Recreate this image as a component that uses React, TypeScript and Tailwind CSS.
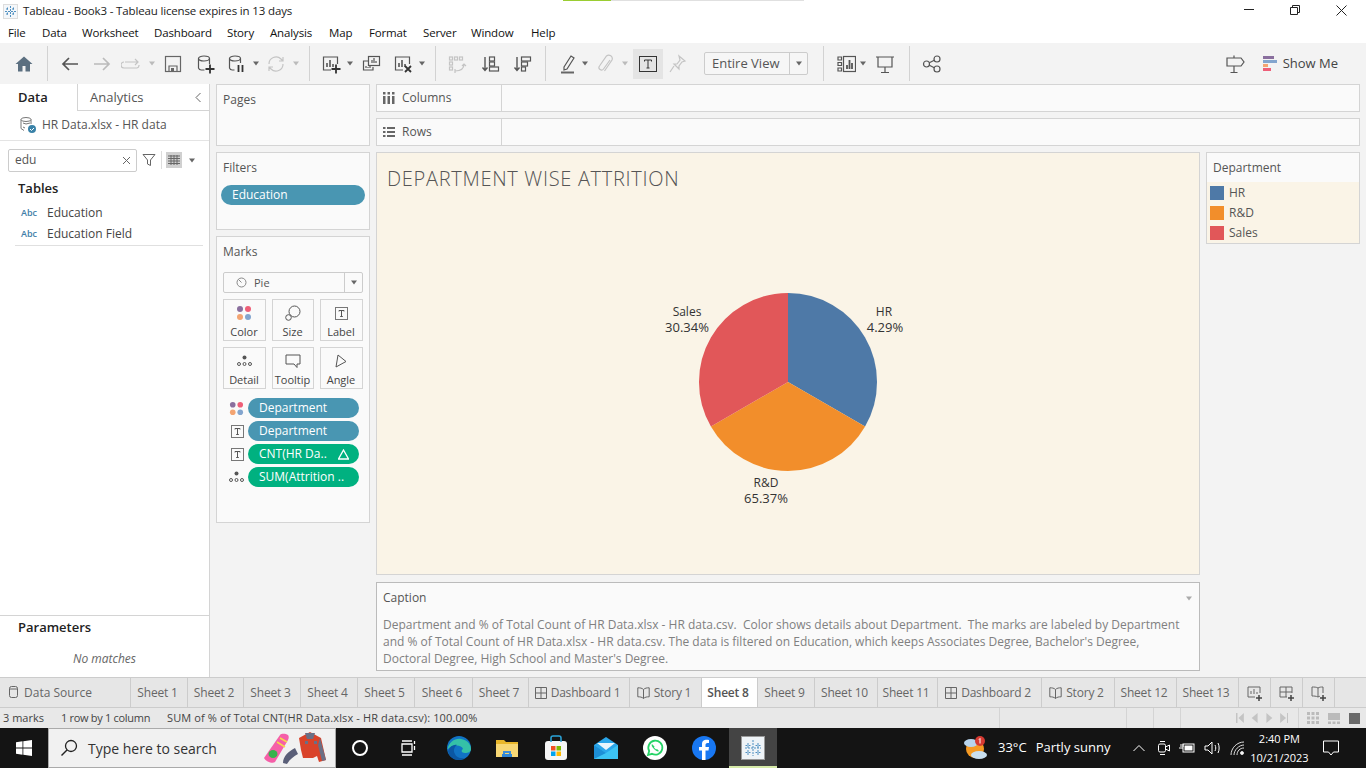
import React from "react";

const S = "#555";
const Svg = ({ w = 20, h = 20, children, className = "" }: any) => (
  <svg width={w} height={h} viewBox={`0 0 ${w} ${h}`} fill="none" stroke={S} strokeWidth={1.2} className={"shrink-0 " + className}>{children}</svg>
);
const Caret = ({ className = "", c = "#666" }: any) => (
  <svg width={8} height={5} viewBox="0 0 8 5" className={"shrink-0 " + className}><path d="M1 0.5h6L4 4.5z" fill={c} /></svg>
);
const Sep = ({ className = "" }: any) => <div className={"w-px h-[35px] bg-[#d2d2d2] shrink-0 " + className} />;

const Dots = ({ size = 16 }: any) => (
  <svg width={size} height={size} viewBox="0 0 16 16" className="shrink-0">
    <circle cx="4" cy="4" r="3" fill="#8a6f9e" /><circle cx="12" cy="4" r="3" fill="#ee5f78" />
    <circle cx="4" cy="12" r="3" fill="#f3a472" /><circle cx="12" cy="12" r="3" fill="#83a5ce" />
  </svg>
);
const TBox = ({ w = 13 }: any) => (
  <svg width={w} height={w} viewBox="0 0 13 13" fill="none" className="shrink-0">
    <rect x="0.5" y="0.5" width="12" height="12" stroke="#777" />
    <path d="M4 4.5V3.5h5v1M6.5 3.5v6M5.2 9.5h2.6" stroke="#555" />
  </svg>
);
const DetailDots = () => (
  <svg width={15} height={12} viewBox="0 0 15 12" fill="none" className="shrink-0">
    <circle cx="7.5" cy="2.5" r="2" fill="#555" />
    <circle cx="2" cy="9" r="1.5" stroke="#555" /><circle cx="7.5" cy="9" r="1.5" stroke="#555" /><circle cx="13" cy="9" r="1.5" stroke="#555" />
  </svg>
);

const Plus = ({ x = 15, y = 15, r = 4.5, c = "#333" }: any) => <path d={`M${x - r} ${y}h${2 * r}M${x} ${y - r}v${2 * r}`} stroke={c} strokeWidth={1.8} />;

const Toolbar = () => (
  <div className="h-[41px] bg-[#f3f3f3] flex items-center shrink-0">
    <svg width={20} height={20} viewBox="0 0 20 20" className="ml-[14px] shrink-0"><path d="M10 2.5 1.5 10H4v7.5h4.5V12h3v5.5H16V10h2.5z" fill="#5b6f80" /></svg>
    <Sep className="ml-[13px]" />
    <Svg className="ml-[12px]"><path d="M18 10H3M9 4l-6 6 6 6" stroke="#555" strokeWidth={1.7} /></Svg>
    <Svg className="ml-[12px]"><path d="M2 10h15M11 4l6 6-6 6" stroke="#bbb" strokeWidth={1.7} /></Svg>
    <Svg className="ml-[9px]"><path d="M4 8h13M4 14h12a2.5 2.5 0 0 0 2-2.5V11M3 8a3 3 0 0 0 0 6h1M14 5l3 3-3 3" stroke="#c4c4c4" /></Svg>
    <Caret className="ml-[7px]" c="#bbb" />
    <Svg className="ml-[7px]"><rect x="2.5" y="2.5" width="15" height="15" stroke="#666" /><path d="M6 17v-5h8v5" stroke="#666" /><rect x="8" y="14" width="3" height="3" fill="#666" stroke="none" /></Svg>
    <Svg className="ml-[12px]"><ellipse cx="9" cy="4.5" rx="5.5" ry="2.5" /><path d="M3.5 4.5V14a3 3 0 0 0 3 2h3M14.5 4.5V10" /><Plus x={15} y={15} r={4.5} /></Svg>
    <Svg className="ml-[11px]"><ellipse cx="9" cy="4.5" rx="5.5" ry="2.5" /><path d="M3.5 4.5V14a3 3 0 0 0 3 2h2M14.5 4.5V9" /><path d="M12.5 11v7M16.5 11v7" stroke="#333" strokeWidth={1.8} /></Svg>
    <Caret className="ml-[6px]" />
    <Svg className="ml-[6px]"><path d="M3 10a7 7 0 0 1 12-5l2 2M17 10a7 7 0 0 1-12 5l-2-2M17 3v4h-4M3 17v-4h4" stroke="#c4c4c4" /></Svg>
    <Caret className="ml-[6px]" c="#bbb" />
    <Sep className="ml-[9px]" />
    <Svg className="ml-[11px]"><path d="M10 16H2.5V3h14v7" /><path d="M6 13V9M9 13V6M12 13v-3" strokeWidth={1.6} /><Plus x={15} y={15} r={4.5} /></Svg>
    <Caret className="ml-[5px]" />
    <Svg className="ml-[7px]"><rect x="7.5" y="2.5" width="11" height="9" /><path d="M11 9V6M13 9V4M15 9V7" /><path d="M7 7H2.5v9H12v-3" /><path d="M5 14v-2M7 14v-1M9 14v-2" /></Svg>
    <Svg className="ml-[12px]"><path d="M10 16H2.5V3h14v7" /><path d="M6 13V9M9 13V6M12 13v-3" strokeWidth={1.6} /><path d="M12 12l6 6M18 12l-6 6" stroke="#333" strokeWidth={1.8} /></Svg>
    <Caret className="ml-[5px]" />
    <Sep className="ml-[9px]" />
    <Svg className="ml-[11px]"><g stroke="#c4c4c4"><rect x="2.5" y="3" width="3" height="3" /><rect x="7.5" y="3" width="3" height="3" /><rect x="12.5" y="3" width="3" height="3" /><rect x="2.5" y="8" width="3" height="3" /><rect x="2.5" y="13" width="3" height="3" /><path d="M8 17c5 0 9-2 9-7M15 12l2-2 2 2M8 15v4" /></g></Svg>
    <Svg className="ml-[13px]"><path d="M5 3v13M2.5 13.5 5 16.5l2.5-3" stroke="#555" strokeWidth={1.4} /><rect x="9.5" y="3" width="5" height="4" /><rect x="9.5" y="8" width="5" height="4" /><rect x="9.5" y="13" width="9" height="4" /></Svg>
    <Svg className="ml-[12px]"><path d="M5 3v13M2.5 13.5 5 16.5l2.5-3" stroke="#555" strokeWidth={1.4} /><rect x="9.5" y="3" width="9" height="4" /><rect x="9.5" y="8" width="6" height="4" /><rect x="9.5" y="13" width="4" height="4" /></Svg>
    <Sep className="ml-[13px]" />
    <Svg className="ml-[12px]"><path d="M6 13 13 2l3 2-7 11-3 1z" /><path d="M3 18.5h13" strokeWidth={2} stroke="#666" /></Svg>
    <Caret className="ml-[3px]" />
    <Svg className="ml-[6px]"><path d="M15 6 8.5 15a2.5 2.5 0 0 1-4-3l7-10a3.5 3.5 0 0 1 5.5 4L9.5 17" stroke="#c4c4c4" /></Svg>
    <Caret className="ml-[6px]" c="#bbb" />
    <div className="ml-[4px] w-[30px] h-[30px] bg-[#e4e4e4] flex items-center justify-center shrink-0">
      <svg width={18} height={16} viewBox="0 0 18 16" fill="none"><rect x="0.5" y="0.5" width="17" height="15" stroke="#333" /><path d="M5.5 5.5V4h7v1.5M9 4v8M7.5 12h3" stroke="#333" /></svg>
    </div>
    <Svg className="ml-[4px]"><path d="M12 2l6 5-3 1-3 4 0 3-5-5 3 0 3-4zM7 12l-4 6" stroke="#c4c4c4" /></Svg>
    <div className="ml-[17px] w-[104px] h-[23px] border border-[#ccc] rounded-[2px] bg-[#f6f6f6] flex items-center shrink-0">
      <div className="w-[84px] pl-[7px] text-[13px] text-[#555] whitespace-nowrap">Entire View</div>
      <div className="flex-1 h-full border-l border-[#ccc] flex items-center justify-center"><Caret /></div>
    </div>
    <Sep className="ml-[15px]" />
    <Svg className="ml-[12px]"><path d="M2 3h3.5v3H2zM2 8.5h3.5v3H2zM2 14h3.5v3H2z" /><rect x="7.5" y="2.5" width="12" height="15" /><path d="M11 15v-4M13.5 15V6M16 15v-6" strokeWidth={1.8} /></Svg>
    <Caret className="ml-[3px]" />
    <Svg className="ml-[8px]"><path d="M1 3h18M3 3v10h14V3M10 13v5M6 18.5h8" /></Svg>
    <Sep className="ml-[14px]" />
    <Svg className="ml-[12px]"><circle cx="4.5" cy="10" r="3" /><circle cx="15" cy="5" r="3" /><circle cx="15" cy="15" r="3" /><path d="M7.3 8.800 12.300 6.200M7.300 11.200l5 2.600" /></Svg>
    <Svg className="ml-auto"><path d="M2 4h14l3 4-3 4H2zM9 4V1.500M9 12v7M5.500 18.500h7" /></Svg>
    <svg width={14} height={15} viewBox="0 0 14 15" className="ml-[18px] shrink-0">
      <rect width="11" height="3" y="0" fill="#8a6f9e" /><rect width="14" height="3" y="4" fill="#83a5ce" /><rect width="5" height="3" y="8" fill="#f3a472" /><rect width="8" height="3" y="12" fill="#ee5f78" />
    </svg>
    <span className="ml-[6px] mr-[28px] text-[13px] text-[#444] whitespace-nowrap">Show Me</span>
  </div>
);

const Abc = () => <span className="text-[9px] font-semibold text-[#3f7ea8] w-[27px] pl-[6px] shrink-0">Abc</span>;

const LeftPane = () => (
  <div className="w-[210px] shrink-0 bg-white border-r border-[#d4d4d4] flex flex-col">
    <div className="h-[27px] flex shrink-0">
      <div className="w-[78px] border-r border-[#d4d4d4] flex items-center pl-[18px] text-[13px] font-semibold text-[#222]">Data</div>
      <div className="flex-1 border-b border-[#d4d4d4] flex items-center pl-[12px] pr-[7px] pt-[1px] justify-between text-[13px] text-[#555]">
        <span>Analytics</span>
        <svg width={8} height={11} viewBox="0 0 8 11" fill="none"><path d="M6.5 1 2 5.500 6.500 10" stroke="#666" /></svg>
      </div>
    </div>
    <div className="h-[30px] border-b border-[#e4e4e4] flex items-center pl-[19px] pb-[2px] shrink-0">
      <svg width={18} height={18} viewBox="0 0 18 18" fill="none" className="shrink-0">
        <ellipse cx="7" cy="3.5" rx="5" ry="2" stroke="#777" /><path d="M2 3.500v9l3 2M12 3.500V8M4 7l3 1 4-1M4 11l2 1" stroke="#777" />
        <circle cx="13" cy="13" r="4" fill="#3a82a8" /><path d="M11 13l1.500 1.500L15 12" stroke="#fff" />
      </svg>
      <span className="ml-[5px] text-[12px] text-[#555] whitespace-nowrap">HR Data.xlsx - HR data</span>
    </div>
    <div className="h-[38px] flex items-center pl-[8px] shrink-0">
      <div className="w-[129px] h-[23px] border border-[#ccc] rounded-[2px] flex items-center justify-between pl-[6px] pr-[5px] text-[12px] text-[#555]">
        <span>edu</span>
        <svg width={9} height={9} viewBox="0 0 9 9" fill="none"><path d="M1 1l7 7M8 1 1 8" stroke="#666" /></svg>
      </div>
      <svg width={14} height={14} viewBox="0 0 14 14" fill="none" className="ml-[5px] shrink-0"><path d="M1 1.500h12L8.500 7v5.500l-3-1.500V7z" stroke="#666" /></svg>
      <div className="ml-[5px] w-px h-[18px] bg-[#ddd]" />
      <div className="ml-[4px] w-[16px] h-[16px] bg-[#d0d0d0] flex items-center justify-center">
        <svg width={12} height={10} viewBox="0 0 12 10"><path d="M0 1h12M0 3.500h12M0 6h12M0 8.500h12M3 0v10M6 0v10M9 0v10" stroke="#666" strokeWidth={1} /></svg>
      </div>
      <Caret className="ml-[6px]" />
    </div>
    <div className="pl-[18px] text-[13px] font-semibold text-[#222] leading-[18px]">Tables</div>
    <div className="pl-[15px] mt-[5px] flex items-center h-[21px] text-[12px] text-[#444]"><Abc /><span className="ml-[5px]">Education</span></div>
    <div className="pl-[15px] flex items-center h-[21px] text-[12px] text-[#444]"><Abc /><span className="ml-[5px]">Education Field</span></div>
    <div className="ml-[15px] mr-[6px] h-px bg-[#e0e0e0] mt-[1px]" />
    <div className="flex-1" />
    <div className="h-[62px] border-t border-[#d4d4d4] shrink-0">
      <div className="pl-[18px] pt-[2px] text-[13px] font-semibold text-[#222]">Parameters</div>
      <div className="text-center mt-[12px] text-[12px] italic text-[#666]">No matches</div>
    </div>
  </div>
);

const Card = ({ className = "", children }: any) => (
  <div className={"bg-[#fafafa] border border-[#d4d4d4] shrink-0 " + className}>{children}</div>
);
const CardTitle = ({ children }: any) => <div className="pl-[6px] text-[12px] text-[#555] leading-[16px]">{children}</div>;

const MarkBtn = ({ icon, label }: any) => (
  <div className="h-[42px] border border-[#d4d4d4] pr-[1px] flex flex-col items-center justify-end text-[11px] text-[#444] leading-[16px]">
    <div className="h-[22px] flex items-center justify-center">{icon}</div>
    <div className="whitespace-nowrap">{label}</div>
  </div>
);
const Pill = ({ icon, green, children, right }: any) => (
  <div className="flex items-center h-[20px]">
    <div className="w-[25px] pr-[4px] flex justify-end shrink-0">{icon}</div>
    <div className={"w-[111px] h-[20px] rounded-full flex items-center justify-between pl-[11px] pr-[10px] text-[12px] text-white whitespace-nowrap " + (green ? "bg-[#00b180]" : "bg-[#4996b2]")}>
      <span>{children}</span>{right}
    </div>
  </div>
);

const Shelves = () => (
  <div className="w-[154px] shrink-0 flex flex-col gap-[6px]">
    <Card className="h-[62px] pt-[7px]"><CardTitle>Pages</CardTitle></Card>
    <Card className="h-[78px] pt-[7px]">
      <CardTitle>Filters</CardTitle>
      <div className="mx-[4px] mt-[9px] h-[20px] rounded-full bg-[#4996b2] pl-[11px] flex items-center text-[12px] text-white">Education</div>
    </Card>
    <Card className="h-[287px] pt-[7px]">
      <CardTitle>Marks</CardTitle>
      <div className="mx-[6px] mt-[12px] h-[21px] border border-[#ccc] rounded-[2px] flex items-center">
        <svg width={11} height={11} viewBox="0 0 11 11" fill="none" className="ml-[12px] shrink-0"><circle cx="5.5" cy="5.5" r="4.5" stroke="#888" /><path d="M5.5 5.500 2.500 2.500" stroke="#888" /></svg>
        <span className="ml-[7px] pt-[1px] text-[11px] text-[#555]">Pie</span>
        <div className="ml-auto w-[18px] h-full border-l border-[#ccc] flex items-center justify-center"><Caret /></div>
      </div>
      <div className="mx-[6px] mt-[6px] grid grid-cols-[43px_42px_43px] gap-x-[6px] gap-y-[6px]">
        <MarkBtn label="Color" icon={<Dots />} />
        <MarkBtn label="Size" icon={<svg width={16} height={16} viewBox="0 0 16 16" fill="none"><circle cx="9.5" cy="6.5" r="5.5" stroke="#555" /><circle cx="3.5" cy="12.5" r="2.8" fill="#fafafa" stroke="#555" /></svg>} />
        <MarkBtn label="Label" icon={<TBox />} />
        <MarkBtn label="Detail" icon={<DetailDots />} />
        <MarkBtn label="Tooltip" icon={<svg width={16} height={15} viewBox="0 0 16 15" fill="none"><path d="M1 1h14v9h-3v3.500L9 10H1z" stroke="#555" /></svg>} />
        <MarkBtn label="Angle" icon={<svg width={12} height={15} viewBox="0 0 12 15" fill="none"><path d="M3 1l8 6.500L1 13z" stroke="#555" /></svg>} />
      </div>
      <div className="ml-[6px] mt-[9px] flex flex-col gap-[3px]">
        <Pill icon={<Dots size={15} />}>Department</Pill>
        <Pill icon={<TBox />}>Department</Pill>
        <Pill icon={<TBox />} green right={<svg width={11} height={11} viewBox="0 0 11 11" fill="none"><path d="M5.500 1 10.500 10H.5z" stroke="#fff" strokeWidth={1.3} /></svg>}>CNT(HR Da..</Pill>
        <Pill icon={<DetailDots />} green>SUM(Attrition ..</Pill>
      </div>
    </Card>
  </div>
);

const ShelfRow = ({ icon, label }: any) => (
  <Card className="h-[28px] flex w-full">
    <div className="w-[125px] border-r border-[#d4d4d4] flex items-center pl-[6px] text-[12px] text-[#555]">
      <span className="w-[19px] flex">{icon}</span>{label}
    </div>
  </Card>
);

const Chart = () => (
  <svg width={822} height={372} viewBox="0 0 822 372" className="block">
    <g transform="translate(411 180)">
      <path d="M0 0V-89A89 89 0 0 1 77.100 44.500Z" fill="#4e79a7" />
      <path d="M0 0L77.100 44.500A89 89 0 0 1 -77.100 44.500Z" fill="#f28e2b" />
      <path d="M0 0L-77.100 44.500A89 89 0 0 1 0 -89Z" fill="#e15759" />
    </g>
    <g fill="#333" fontSize="12" textAnchor="middle">
      <text x="310" y="114">Sales</text><text x="310" y="130" fontSize="13">30.34%</text>
      <text x="507" y="114">HR</text><text x="508" y="130" fontSize="13">4.29%</text>
      <text x="389" y="285">R&amp;D</text><text x="389" y="301" fontSize="13">65.37%</text>
    </g>
  </svg>
);

const Legend = () => (
  <div className="w-[154px] h-[92px] border border-[#d4d4d4] bg-[#fafafa] shrink-0 flex flex-col">
    <div className="h-[29px] pl-[6px] flex items-center text-[12px] text-[#555]">Department</div>
    <div className="flex-1 bg-[#faf4e7] pl-[3px] pt-[1px] flex flex-col text-[12px] text-[#555]">
      {[["HR", "bg-[#4e79a7]"], ["R&D", "bg-[#f28e2b]"], ["Sales", "bg-[#e15759]"]].map(([t, c]) => (
        <div key={t} className="h-[20px] flex items-center">
          <span className={"w-[14px] h-[14px] mr-[5px] " + c} />{t}
        </div>
      ))}
    </div>
  </div>
);

const Tab = ({ w, icon, active, children }: any) => (
  <div className={w + " h-full border-r border-[#ccc] pr-[3px] flex items-center justify-center gap-[4px] text-[12px] tracking-[-0.2px] whitespace-nowrap shrink-0 " + (active ? "bg-white font-semibold text-[#555]" : "text-[#666]")}>
    {icon}{children}
  </div>
);
const Dash = () => <svg width={12} height={12} viewBox="0 0 12 12" fill="none" className="shrink-0"><path d="M.5.500h11v11H.5zM6 .5v11M.5 6h11" stroke="#666" /></svg>;
const Book = () => <svg width={13} height={12} viewBox="0 0 13 12" fill="none" className="shrink-0"><path d="M6.500 2.500C5 1 3 .8.800.8v9c2.200 0 4.200.2 5.700 1.700 1.500-1.500 3.500-1.700 5.700-1.700v-9C10 .8 8 1 6.500 2.500zM6.500 2.500v9" stroke="#666" /></svg>;

const Tabs = () => (
  <div className="h-[31px] bg-[#e6e6e6] border-t border-b border-[#ccc] flex shrink-0">
    <div className="w-[131px] h-full border-r border-[#ccc] flex items-center pl-[9px] gap-[5px] text-[12px] text-[#666] shrink-0">
      <svg width={10} height={13} viewBox="0 0 10 13" fill="none" className="shrink-0"><rect x=".5" y=".5" width="8" height="11" rx="2" stroke="#666" /><path d="M.5 3h8" stroke="#666" /></svg>
      Data Source
    </div>
    <Tab w="w-[57px]">Sheet 1</Tab>
    <Tab w="w-[56px]">Sheet 2</Tab>
    <Tab w="w-[57px]">Sheet 3</Tab>
    <Tab w="w-[57px]">Sheet 4</Tab>
    <Tab w="w-[57px]">Sheet 5</Tab>
    <Tab w="w-[58px]">Sheet 6</Tab>
    <Tab w="w-[56px]">Sheet 7</Tab>
    <Tab w="w-[101px]" icon={<Dash />}>Dashboard 1</Tab>
    <Tab w="w-[72px]" icon={<Book />}>Story 1</Tab>
    <Tab w="w-[56px]" active>Sheet 8</Tab>
    <Tab w="w-[57px]">Sheet 9</Tab>
    <Tab w="w-[63px]">Sheet 10</Tab>
    <Tab w="w-[60px]">Sheet 11</Tab>
    <Tab w="w-[104px]" icon={<Dash />}>Dashboard 2</Tab>
    <Tab w="w-[73px]" icon={<Book />}>Story 2</Tab>
    <Tab w="w-[62px]">Sheet 12</Tab>
    <Tab w="w-[62px]">Sheet 13</Tab>
    <div className="w-[32px] h-full border-r border-[#ccc] flex items-center justify-center shrink-0"><svg width={16} height={16} viewBox="0 0 16 16" fill="none"><path d="M8 12H1V2h12v6" stroke="#666" /><path d="M4 9V6M7 9V4M10 9V7" stroke="#666" /><path d="M9 13h6M12 10v6" stroke="#444" strokeWidth={1.5} /></svg></div>
    <div className="w-[32px] h-full border-r border-[#ccc] flex items-center justify-center shrink-0"><svg width={16} height={16} viewBox="0 0 16 16" fill="none"><path d="M8 12H1V2h12v6M7 2v10M1 7h12" stroke="#666" /><path d="M9 13h6M12 10v6" stroke="#444" strokeWidth={1.5} /></svg></div>
    <div className="w-[32px] h-full border-r border-[#ccc] flex items-center justify-center shrink-0"><svg width={16} height={16} viewBox="0 0 16 16" fill="none"><path d="M7 3C5.500 2 3 2 1 2v9c2 0 4 0 6 1 1-.5 1.500-.7 2-.8M7 3c1.500-1 3-1 5-1v6M7 3v9" stroke="#666" /><path d="M9 13h6M12 10v6" stroke="#444" strokeWidth={1.5} /></svg></div>
  </div>
);

const Status = () => (
  <div className="h-[20px] bg-[#e8e8e8] flex items-center text-[11px] text-[#444] shrink-0">
    <span className="ml-[3px] w-[58px]">3 marks</span>
    <span className="w-[106px] tracking-[-0.3px] whitespace-nowrap">1 row by 1 column</span>
    <span className="w-[832px] tracking-[0.12px] whitespace-nowrap">SUM of % of Total CNT(HR Data.xlsx - HR data.csv): 100.00%</span>
    <div className="w-px h-full bg-[#d4d4d4]" />
    <div className="w-[126px]" />
    <div className="w-px h-full bg-[#d4d4d4]" />
    <div className="w-[26px]" />
    <div className="w-px h-full bg-[#d4d4d4]" />
    <div className="w-[26px]" />
    <div className="w-px h-full bg-[#d4d4d4]" />
    <svg width={52} height={10} viewBox="0 0 53 10" fill="#c4c4c4" className="ml-[55px] shrink-0">
      <path d="M0 0h1.500v10H0zM8 0v10L2.500 5zM22 0v10l-6-5zM31 0v10l6-5zM45 0v10l6-5zM52 0h1.500v10H52z" />
    </svg>
    <div className="ml-auto flex items-center gap-[9px] pr-[6px] pl-[8px] border-l border-[#d4d4d4] h-full">
      <svg width={12} height={12} viewBox="0 0 12 12" fill="#bbb"><path d="M0 0h3v3H0zM4.500 0h3v3h-3zM9 0h3v3H9zM0 4.500h3v3H0zM4.500 4.500h3v3h-3zM9 4.500h3v3H9zM0 9h3v3H0zM4.500 9h3v3h-3zM9 9h3v3H9z" /></svg>
      <svg width={12} height={11} viewBox="0 0 12 11" fill="#bbb" className="w-[12px]"><path d="M0 0h12v7H0zM0 8.500h3V11H0zM4.500 8.500h3V11h-3zM9 8.500h3V11H9z" /></svg>
      <div className="w-[11px] h-[11px] bg-[#6a6a6a]" />
    </div>
  </div>
);

const Taskbar = () => (
  <div className="h-[40px] bg-[#141414] flex items-center text-white shrink-0">
    <svg width={16} height={16} viewBox="0 0 16 16" fill="#fff" className="ml-[16px] shrink-0"><path d="M0 2.200 6.500 1.300v6.300H0zM7.300 1.200 16 0v7.600H7.300zM0 8.400h6.500v6.300L0 13.800zM7.300 8.400H16V16l-8.700-1.200z" /></svg>
    <div className="ml-[16px] w-[288px] h-full bg-[#f1f1f1] border border-[#aaa] flex items-center shrink-0">
      <svg width={18} height={18} viewBox="0 0 18 18" fill="none" className="ml-[11px] shrink-0"><circle cx="11" cy="7" r="5.500" stroke="#222" strokeWidth={1.3} /><path d="M7 11 1.500 16.500" stroke="#222" strokeWidth={1.5} /></svg>
      <span className="ml-[10px] text-[14px] text-[#333] whitespace-nowrap">Type here to search</span>
      <svg width={66} height={36} viewBox="0 0 66 36" className="ml-auto mr-[6px] shrink-0">
        <path d="M1 28 17 5c2-2 6-1 8 0 1 1 1 3 0 5L12 32c-2 2-9 0-11-4z" fill="#f55fa8" /><path d="M14 12l8 5M17 8l7 4" stroke="#f5d94a" strokeWidth={1.5} /><ellipse cx="10" cy="24" rx="4.500" ry="4" fill="#37b24d" />
        <path d="M20 33c0-7 6-12 12-15l3 6c-4 2-8 5-11 10z" fill="#5a5f78" />
        <path d="M36 8 47 2l11 6 5 22-7 2-2-6-4 2H40l-2-8z" fill="#d9432a" /><path d="M42 3h10l-2 6h-6z" fill="#6a6f85" /><path d="M57 8l6 22-4 1-4-16z" fill="#6a6f85" /><rect x="42" y="11" width="3" height="3" fill="#6a6f85" /><rect x="51" y="11" width="3" height="3" fill="#6a6f85" />
      </svg>
    </div>
    <div className="ml-[16px] w-[16px] h-[16px] rounded-full border-[2.5px] border-white shrink-0" />
    <svg width={16} height={16} viewBox="0 0 16 16" fill="none" stroke="#fff" className="ml-[32px] shrink-0"><path d="M2 1h10M2 15h10M2 4h10v8H2zM14.500 1v3M14.500 6v4" strokeWidth={1.3} /></svg>
    <svg width={26} height={26} viewBox="0 0 26 26" className="ml-[30px] shrink-0">
      <circle cx="13" cy="13" r="12" fill="#1173c5" /><path d="M1.500 14C3 7 9 3 15 4c6 1 10 5 10 10 0 3-3 4-6 4-4 0-4-3-2-4-1-4-10-5-15 0z" fill="#35c1a7" /><path d="M13 25c-5 0-10-3-11-9 2-5 6-7 9-6-3 2-4 6-2 9 1 3 5 5 10 4-2 1-4 2-6 2z" fill="#0b57a4" />
    </svg>
    <svg width={22} height={22} viewBox="0 0 22 22" className="ml-[24px] shrink-0"><path d="M0 3h8l2 2h12v15H0z" fill="#e8b62a" /><path d="M0 7h22v13H0z" fill="#f7d774" /><path d="M7 19v-5h8v5h-2v-3H9v3z" fill="#3a8edb" /><rect x="6" y="17" width="10" height="3" fill="#2f86d6" /></svg>
    <svg width={24} height={26} viewBox="0 0 24 26" className="ml-[26px] shrink-0"><rect x="1" y="6" width="22" height="19" rx="3" fill="#f6f6f6" /><path d="M7 7V3a2 2 0 0 1 2-2h6a2 2 0 0 1 2 2v4" stroke="#2aa4d9" strokeWidth={1.5} fill="none" /><rect x="7" y="11" width="4.500" height="4.500" fill="#f25022" /><rect x="12.500" y="11" width="4.500" height="4.500" fill="#7fba00" /><rect x="7" y="16.500" width="4.500" height="4.500" fill="#00a4ef" /><rect x="12.500" y="16.500" width="4.500" height="4.500" fill="#ffb900" /></svg>
    <svg width={24} height={22} viewBox="0 0 24 22" className="ml-[26px] shrink-0"><path d="M0 8 12 0l12 8v14H0z" fill="#2aa6ea" /><path d="M0 8l12 8 12-8v14H0z" fill="#3cc3f3" /><path d="M3 6h18L12 13z" fill="#e9f6fd" /><path d="M0 8l12 8-12 6z" fill="#1d8fd6" /></svg>
    <svg width={24} height={24} viewBox="0 0 24 24" className="ml-[25px] shrink-0"><circle cx="12" cy="12" r="12" fill="#fff" /><path d="M5 19l1.200-4A7 7 0 1 1 9 17.800z" fill="none" stroke="#25d366" strokeWidth={1.8} /><path d="M9 8c-1 1 0 3 2 5s4 3 5 2l-2-2-1 .5-2-2 .5-1z" fill="#25d366" /></svg>
    <svg width={24} height={24} viewBox="0 0 24 24" className="ml-[25px] shrink-0"><circle cx="12" cy="12" r="12" fill="#1877f2" /><path d="M13.500 24v-9.500h3l.5-3.500h-3.500V9c0-1 .5-2 2-2H17V4c-3-.7-7-.5-7 4v3H7v3.500h3V24z" fill="#fff" /></svg>
    <div className="ml-[13px] w-[48px] h-full bg-[#444] flex items-center justify-center relative shrink-0">
      <div className="w-[24px] h-[24px] bg-[#eef3f7] border border-[#999] flex items-center justify-center">
        <svg width={20} height={20} viewBox="0 0 20 20" fill="none" stroke="#4f8fc0"><path d="M10 2v16M2 10h16M5 5v5M2.500 7.500h5M15 5v5M12.500 7.500h5M5 12v5M2.500 14.500h5M15 12v5M12.500 14.500h5" strokeDasharray="2 1" /></svg>
      </div>
      <div className="absolute bottom-0 left-0 right-0 h-[2px] bg-[#d6eaa8]" />
    </div>
    <svg width={24} height={24} viewBox="0 0 24 24" className="ml-[186px] shrink-0"><circle cx="12" cy="13" r="9" fill="#f59a23" /><ellipse cx="8" cy="7" rx="7" ry="4" fill="#b8d4ec" /><ellipse cx="16" cy="19" rx="8" ry="4" fill="#c9dff0" /><circle cx="17" cy="5" r="5" fill="#d63a32" /><path d="M17 2.500v5M16 3.500l1-1" stroke="#fff" fill="none" /></svg>
    <span className="ml-[11px] text-[13px] whitespace-nowrap">33°C</span>
    <span className="ml-[9px] text-[13px] whitespace-nowrap">Partly sunny</span>
    <svg width={12} height={8} viewBox="0 0 12 8" fill="none" className="ml-[23px] shrink-0"><path d="M.5 7 6 1.500 11.500 7" stroke="#fff" /></svg>
    <svg width={14} height={16} viewBox="0 0 14 16" fill="none" stroke="#fff" className="ml-[12px] shrink-0"><rect x="1.500" y="4" width="7" height="8" rx="1.500" /><path d="M8.500 7l4-2v6l-4-2M3 1.500h5M3 14.500h5" /></svg>
    <svg width={16} height={12} viewBox="0 0 16 12" fill="none" stroke="#fff" className="ml-[8px] shrink-0"><rect x="4" y="2" width="11" height="8" /><rect x="6" y="4" width="7" height="4" fill="#fff" /><path d="M0 6h4M2 2v3M4 2v3" /></svg>
    <svg width={17} height={14} viewBox="0 0 17 14" fill="none" stroke="#fff" className="ml-[9px] shrink-0"><path d="M1 5h3l4-4v12L4 9H1zM11 4c1 2 1 4 0 6M14 2c1.500 3 1.500 7 0 10" /></svg>
    <svg width={15} height={15} viewBox="0 0 15 15" fill="none" stroke="#ddd" className="ml-[9px] shrink-0"><path d="M1 14C1 7 7 1 14 1M4 14c0-5 5-10 10-10M7 14c0-4 3-7 7-7" /><circle cx="12" cy="12" r="1.500" fill="#fff" /></svg>
    <div className="ml-[1px] w-[66px] text-[11px] leading-[19px] text-center whitespace-nowrap shrink-0">
      <div>2:40 PM</div><div>10/21/2023</div>
    </div>
    <svg width={16} height={16} viewBox="0 0 16 16" fill="none" stroke="#fff" className="ml-[11px] shrink-0"><path d="M.5 1h15v11h-5L8 15l-2.500-3h-5z" /></svg>
  </div>
);

export default function App() {
  return (
    <div className="w-[1366px] h-[768px] overflow-hidden flex flex-col bg-white text-[12px]" style={{ fontFamily: '"Open Sans", "Noto Sans", sans-serif' }}>
      <div className="h-[22px] flex items-center relative shrink-0">
        <div className="absolute top-0 left-[563px] w-[241px] h-px bg-[#e0e0e0]"><div className="w-[48px] h-px bg-[#9acd32]" /></div>
        <svg width={15} height={15} viewBox="0 0 15 15" fill="none" stroke="#4f8fc0" className="ml-[3px] shrink-0"><rect x=".5" y=".5" width="14" height="14" stroke="#ddd" fill="#f4f7fa" /><path d="M7.500 2v11M2 7.500h11M4.500 3.500v3M3 5h3M10.500 3.500v3M9 5h3M4.500 8.500v3M3 10h3M10.500 8.500v3M9 10h3" strokeDasharray="2 1" /></svg>
        <span className="ml-[5px] text-[11.5px] tracking-[-0.15px] text-[#222] whitespace-nowrap">Tableau - Book3 - Tableau license expires in 13 days</span>
        <div className="ml-auto flex items-center -mt-[2px]">
          <svg width={10} height={2} viewBox="0 0 10 2" className="mr-[36px]"><path d="M0 .5h10" stroke="#222" /></svg>
          <svg width={10} height={10} viewBox="0 0 10 10" fill="none" className="mr-[36px]"><path d="M.5 2.500h7v7h-7zM2.500 2.500v-2h7v7h-2" stroke="#222" /></svg>
          <svg width={11} height={11} viewBox="0 0 11 11" fill="none" className="mr-[19px]"><path d="M.5.500l10 10M10.500.500l-10 10" stroke="#222" /></svg>
        </div>
      </div>
      <div className="h-[21px] flex items-center shrink-0 text-[11.5px] tracking-[-0.15px] text-[#111] pl-[8px]">
        {[["File", "w-[34px]"], ["Data", "w-[40px]"], ["Worksheet", "w-[72px]"], ["Dashboard", "w-[73px]"], ["Story", "w-[43px]"], ["Analysis", "w-[59px]"], ["Map", "w-[40px]"], ["Format", "w-[54px]"], ["Server", "w-[48px]"], ["Window", "w-[60px]"], ["Help", "w-[30px]"]].map(([t, w]) => (
          <span key={t} className={w + " whitespace-nowrap shrink-0"}>{t}</span>
        ))}
      </div>
      <Toolbar />
      <div className="h-[593px] flex bg-[#f3f3f3] shrink-0">
        <LeftPane />
        <div className="ml-[6px]"><Shelves /></div>
        <div className="ml-[6px] w-[984px] shrink-0 flex flex-col gap-[6px]">
          <ShelfRow label="Columns" icon={<svg width={12} height={12} viewBox="0 0 12 12" fill="#666"><rect x="0" y="4" width="2.500" height="8" /><rect x="4.500" y="4" width="2.500" height="8" /><rect x="9" y="4" width="2.500" height="8" /><rect x="0" y="0" width="2.500" height="2.500" /><rect x="4.500" y="0" width="2.500" height="2.500" /><rect x="9" y="0" width="2.500" height="2.500" /></svg>} />
          <ShelfRow label="Rows" icon={<svg width={12} height={12} viewBox="0 0 12 12" fill="#666"><rect x="4" y="1" width="8" height="2" /><rect x="4" y="5" width="8" height="2" /><rect x="4" y="9" width="8" height="2" /><rect x="0" y="1" width="2.500" height="2" /><rect x="0" y="5" width="2.500" height="2" /><rect x="0" y="9" width="2.500" height="2" /></svg>} />
          <div className="flex">
            <div className="w-[824px] shrink-0 flex flex-col gap-[7px]">
              <div className="h-[423px] border border-[#d4d4d4] bg-[#faf4e7]">
                <div className="h-[49px] pl-[10px] pt-[12px] text-[20px] font-light tracking-[0.7px] leading-[28px] text-[#555] whitespace-nowrap">DEPARTMENT WISE ATTRITION</div>
                <Chart />
              </div>
              <div className="h-[89px] border border-[#bbb] bg-[#fafafa] px-[6px]">
                <div className="h-[30px] flex items-center justify-between text-[12px] text-[#555]">
                  <span>Caption</span>
                  <Caret c="#aaa" />
                </div>
                <p className="mt-[3px] text-[12px] leading-[17px] text-[#808080] whitespace-pre">{"Department and % of Total Count of HR Data.xlsx - HR data.csv.  Color shows details about Department.  The marks are labeled by Department\nand % of Total Count of HR Data.xlsx - HR data.csv. The data is filtered on Education, which keeps Associates Degree, Bachelor's Degree,\nDoctoral Degree, High School and Master's Degree."}</p>
              </div>
            </div>
            <div className="ml-[6px]"><Legend /></div>
          </div>
        </div>
      </div>
      <Tabs />
      <Status />
      <Taskbar />
    </div>
  );
}
